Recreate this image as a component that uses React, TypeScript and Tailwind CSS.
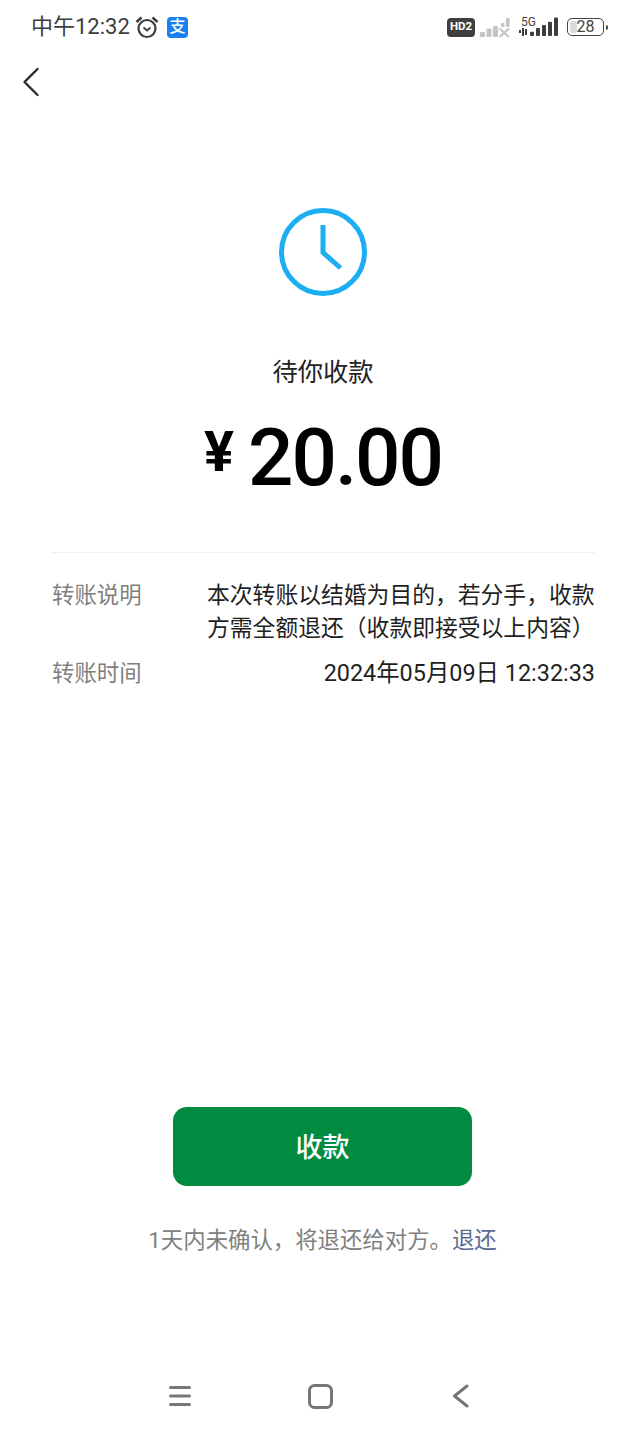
const cjk = "font-['Roboto','Noto_Sans_CJK_SC',sans-serif]";

const NOTE = '本次转账以结婚为目的\uFF0C若分手\uFF0C收款方需全额退还\uFF08收款即接受以上内容\uFF09';
const EXPIRY = '1天内未确认\uFF0C将退还给对方\u3002';

function StatusBar() {
  return (
    <div className="h-[54px] flex items-center justify-between pl-[31px] pr-[27px] text-[#3d3d3d]">
      <div className="flex items-center">
        <span className="w-[98px] text-[22px] leading-none whitespace-nowrap">中午12:32</span>
        <svg className="ml-[6px] w-[24px] h-[24px]" viewBox="0 0 24 24" fill="none" stroke="#3d3d3d" strokeWidth="2.200">
          <circle cx="12" cy="13.500" r="8.500" />
          <path d="M8.500 12.500l3.500 3 3.500-3" strokeWidth="1.800" />
          <path d="M1.500 7L6.500 2.500M22.500 7L17.500 2.500" strokeWidth="2.400" />
        </svg>
        <div className="ml-[8px] w-[21px] h-[21px] rounded-[4px] bg-[#1a7ff0] flex items-center justify-center text-white text-[16px] leading-none font-medium">
          支
        </div>
      </div>
      <div className="flex items-center">
        <div className="w-[28px] h-[19px] rounded-[4px] bg-[#3f3f3f] text-white text-[11.500px] font-bold leading-none flex items-center justify-center">
          HD2
        </div>
        <svg className="ml-[5px] w-[30px] h-[22px]" viewBox="0 0 30 22" fill="#c4c4c4">
          <rect x="0" y="16" width="5" height="5" rx="1" />
          <rect x="6.500" y="12.500" width="5" height="8.500" rx="1" />
          <rect x="13" y="10" width="5" height="11" rx="1" />
          <rect x="21" y="7" width="3.500" height="4" rx="1" />
          <rect x="26" y="2" width="3.500" height="9" rx="1" />
          <path d="M19.500 12.500l9.500 8.500M29 12.500l-9.500 8.500" stroke="#c4c4c4" strokeWidth="2.200" fill="none" />
        </svg>
        <div className="ml-[9px] w-[39px] h-[24px] relative">
          <span className="absolute left-[2px] top-[1px] text-[12px] leading-none text-[#444]">5G</span>
          <svg className="absolute left-0 top-0 w-[39px] h-[24px]" viewBox="0 0 39 24" fill="#3d3d3d">
            <path d="M0 15h2v3H0zM3 13h2v8H3zM6 14h2v6H6z" />
            <rect x="11" y="16.700" width="4" height="4.300" rx="1" />
            <rect x="17" y="13" width="4" height="8" rx="1" />
            <rect x="23" y="10" width="4" height="11" rx="1" />
            <rect x="29" y="6.700" width="4" height="14.300" rx="1" />
            <rect x="35" y="2.500" width="4" height="18.500" rx="1" />
          </svg>
        </div>
        <div className="ml-[9px] w-[37px] h-[18px] rounded-[5px] border-[1.500px] border-[#444] relative flex items-center justify-center text-[16px] leading-none text-[#444]">
          <div className="absolute left-[2px] top-[2px] bottom-[2px] w-[7px] rounded-[2px] bg-[#dcdcdc]" />
          <span className="relative">28</span>
        </div>
        <div className="ml-[2px] w-[2px] h-[5px] rounded-r-sm bg-[#444]" />
      </div>
    </div>
  );
}

function InfoRow({ label, children, className }: { label: string; children: React.ReactNode; className?: string }) {
  return (
    <div className={`flex justify-between ${className ?? ''}`}>
      <span className="text-[#7f7f7f] shrink-0 text-[22.400px] leading-[33px]">{label}</span>
      {children}
    </div>
  );
}

export default function App() {
  return (
    <div className={`w-[635px] h-[1439px] bg-white flex flex-col overflow-hidden ${cjk}`}>
      <StatusBar />

      {/* Back */}
      <div className="h-[56px] pl-[22px] flex items-center">
        <svg className="w-[18px] h-[30px]" viewBox="0 0 18 30" fill="none" stroke="#2b2b2b" strokeWidth="2.400" strokeLinecap="round" strokeLinejoin="round">
          <path d="M15.500 2L2.500 15l13 13" />
        </svg>
      </div>

      {/* Status and amount */}
      <div className="flex flex-col items-center pt-[98px] pl-[11px]">
        <svg className="w-[88px] h-[88px]" viewBox="0 0 88 88" fill="none" stroke="#1aaef2" strokeWidth="5">
          <circle cx="44" cy="44" r="41.500" />
          <path d="M44 17v27.500L61.500 60" />
        </svg>
        <div className="mt-[59px] text-[25.300px] leading-[36px] text-[#222]">待你收款</div>
        <div className="mt-[23px] flex items-center h-[88px] text-black">
          <span className="text-[56px] font-bold leading-none mr-[14px] mb-[12px]">¥</span>
          <span className="text-[80px] font-medium leading-none tracking-[-2px]">20.00</span>
        </div>
      </div>

      {/* Transfer details */}
      <div className="ml-[52px] mr-[40px] mt-[50px] pt-[26px] border-t border-[#efefef]">
        <InfoRow label="转账说明">
          <p className="w-[388px] text-[22.800px] leading-[33px] text-[#1f1f1f]">{NOTE}</p>
        </InfoRow>
        <InfoRow label="转账时间" className="mt-[12px]">
          <span className="text-[23.400px] leading-[33px] text-[#1f1f1f]">2024年05月09日 12:32:33</span>
        </InfoRow>
      </div>

      <div className="flex-1" />

      {/* Action */}
      <div className="flex flex-col items-center pl-[10px]">
        <button className="w-[299px] h-[79px] pt-[3px] rounded-[14px] bg-[#018b40] text-white text-[27px] font-medium leading-none">
          收款
        </button>
        <p className="mt-[37px] text-[22.400px] leading-[34px] text-[#808080]">
          {EXPIRY}
          <span className="text-[#576b95]">退还</span>
        </p>
      </div>

      {/* Navigation bar */}
      <div className="mt-[126px] mb-[30px] h-[26px] pl-[168px] flex items-center">
        <svg className="w-[24px] h-[24px]" viewBox="0 0 24 24" fill="none" stroke="#767676" strokeWidth="3" strokeLinecap="round">
          <path d="M2.500 3.500h19M2.500 12h19M2.500 20.500h19" />
        </svg>
        <svg className="ml-[116px] w-[25px] h-[25px]" viewBox="0 0 25 25" fill="none" stroke="#767676" strokeWidth="3">
          <rect x="1.500" y="1.500" width="22" height="22" rx="5" />
        </svg>
        <svg className="ml-[119px] w-[17px] h-[24px]" viewBox="0 0 17 24" fill="none" stroke="#767676" strokeWidth="3" strokeLinecap="round" strokeLinejoin="round">
          <path d="M15 2L2.500 12 15 22" />
        </svg>
      </div>
    </div>
  );
}
